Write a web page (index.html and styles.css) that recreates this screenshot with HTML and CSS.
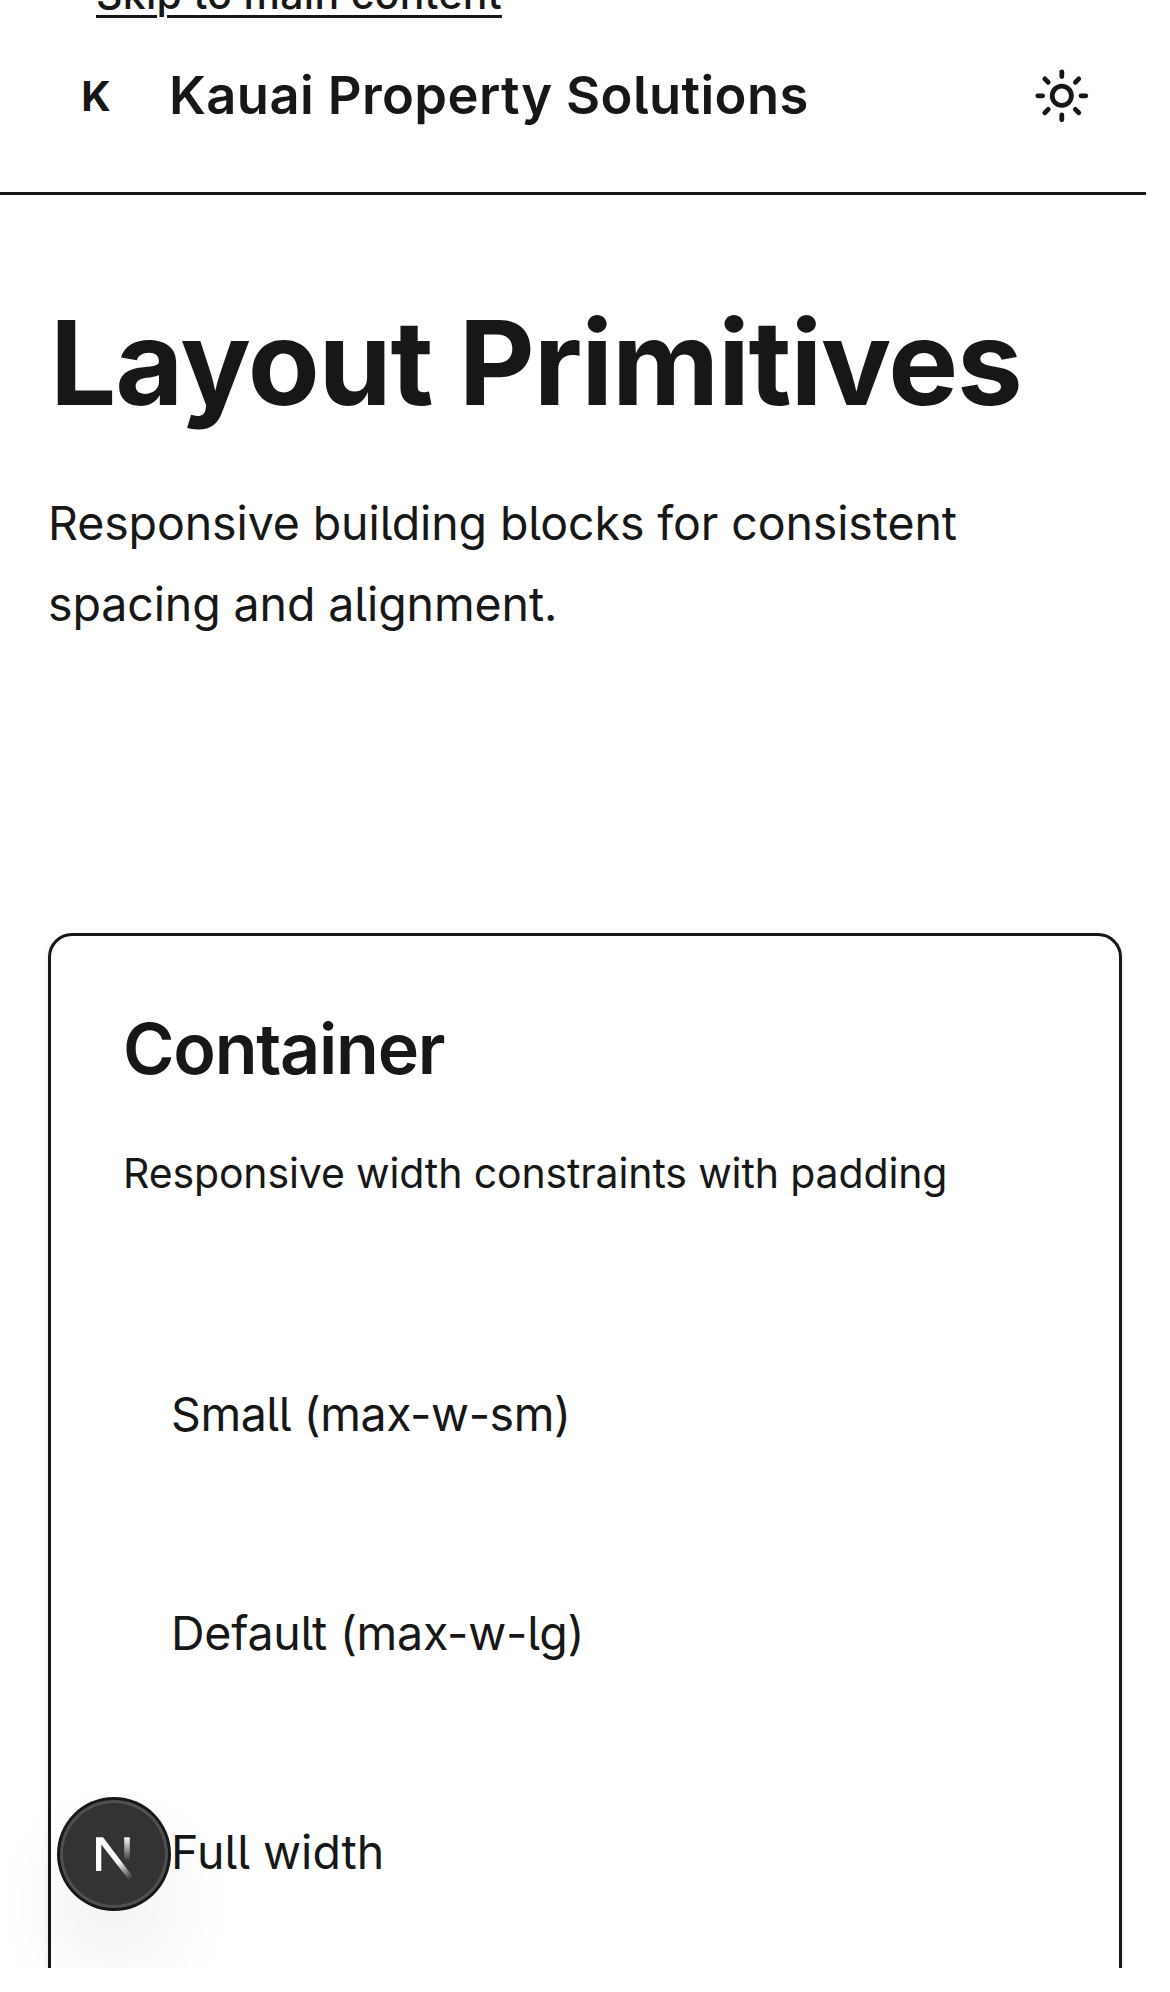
FILE: index.html
```html
<!DOCTYPE html>
<html lang="en">
<head>
  <meta charset="utf-8">
  <title>Layout Primitives</title>
  <link rel="stylesheet" href="styles.css">
</head>
<body>
  <div class="page">
    <a class="skip-link" href="#main">Skip to main content</a>
    <header class="header">
      <div class="brand">
        <span class="brand-mark">K</span>
        <span class="brand-name">Kauai Property Solutions</span>
      </div>
      <svg class="sun" viewBox="0 0 24 24" fill="none" stroke="currentColor" stroke-width="2" stroke-linecap="round" stroke-linejoin="round" role="img" aria-label="Toggle theme">
        <circle cx="12" cy="12" r="4"/>
        <path d="M12 2v2M12 20v2M4.93 4.93l1.41 1.41M17.66 17.66l1.41 1.41M2 12h2M20 12h2M6.34 17.66l-1.41 1.41M19.07 4.93l-1.41 1.41"/>
      </svg>
    </header>
    <main class="main" id="main">
      <h1 class="title">Layout Primitives</h1>
      <p class="lead">Responsive building blocks for consistent spacing and alignment.</p>
      <section class="card">
        <h2 class="card-title">Container</h2>
        <p class="card-text">Responsive width constraints with padding</p>
        <div class="samples">
          <div class="sample sample-sm">Small (max-w-sm)</div>
          <div class="sample sample-lg">Default (max-w-lg)</div>
          <div class="sample">Full width</div>
        </div>
      </section>
    </main>
    <div class="badge">
      <svg class="badge-logo" viewBox="10 10 108 108">
        <defs>
          <linearGradient id="diagonal" gradientUnits="userSpaceOnUse" x1="69" y1="71" x2="82" y2="88">
            <stop offset="0" stop-color="#fff"/>
            <stop offset="1" stop-color="#fff" stop-opacity="0"/>
          </linearGradient>
          <linearGradient id="stem" gradientUnits="userSpaceOnUse" x1="77" y1="47" x2="77" y2="71">
            <stop offset="0" stop-color="#fff"/>
            <stop offset="1" stop-color="#fff" stop-opacity="0"/>
          </linearGradient>
        </defs>
        <path d="M74.2 47.3h5.6V71h-5.6z" fill="url(#stem)"/>
        <path d="M46 81V47.3h7L83.3 87.2 79.2 90.3 51.3 54.6V81z" fill="url(#diagonal)"/>
      </svg>
    </div>
  </div>
</body>
</html>
```
FILE: styles.css
```css
* {
  box-sizing: border-box;
  margin: 0;
}

body {
  background: #fff;
  color: #171717;
  font-family: Inter, "Liberation Sans", sans-serif;
  font-feature-settings: "cv05";
}

.page {
  position: relative;
  width: 1146px;
  height: 1968px;
  overflow: hidden;
}

.skip-link {
  position: absolute;
  top: -30px;
  left: 96px;
  color: inherit;
  font-size: 41px;
  font-weight: 500;
  line-height: 48px;
  letter-spacing: 0.29px;
  white-space: nowrap;
  text-decoration: underline;
  text-decoration-thickness: 3px;
  text-underline-offset: 6px;
}

.header {
  display: flex;
  align-items: center;
  justify-content: space-between;
  height: 195px;
  padding: 0 55px 0 48px;
  border-bottom: 3px solid #171717;
}

.brand {
  display: flex;
  align-items: center;
  gap: 25px;
}

.brand-mark {
  width: 96px;
  font-size: 41px;
  font-weight: 700;
  text-align: center;
}

.brand-name {
  padding-bottom: 2px;
  font-size: 52.5px;
  font-weight: 600;
  letter-spacing: 0.39px;
  white-space: nowrap;
}

.sun {
  width: 57.6px;
  height: 57.6px;
}

.main {
  padding: 107px 24px 0 48px;
}

.title {
  padding-left: 2px;
  font-size: 117.5px;
  font-weight: 700;
  line-height: 120px;
  letter-spacing: -1.21px;
}

.lead {
  margin-top: 61px;
  font-size: 46.5px;
  line-height: 81px;
  letter-spacing: -0.11px;
}

.card {
  height: 1200px;
  margin-top: 288px;
  padding: 68px 72px;
  border: 3px solid #171717;
  border-radius: 24px;
  box-shadow: 0 3px 6px rgba(0, 0, 0, 0.1);
}

.card-title {
  font-size: 70px;
  font-weight: 600;
  line-height: 90px;
  letter-spacing: -1.25px;
}

.card-text {
  margin-top: 48px;
  font-size: 41px;
  line-height: 63px;
  letter-spacing: -0.13px;
}

.samples {
  display: flex;
  flex-direction: column;
  gap: 48px;
  margin-top: 124px;
}

.sample {
  padding: 48px;
  font-size: 46.5px;
  line-height: 75px;
}

.sample-sm {
  letter-spacing: -0.44px;
}

.sample-lg {
  letter-spacing: -0.23px;
}

.badge {
  position: absolute;
  top: 1800px;
  left: 60px;
  width: 108px;
  height: 108px;
  border-radius: 50%;
  background: #333;
  box-shadow:
    0 0 0 3px #171717,
    inset 0 0 0 3px rgba(255, 255, 255, 0.14),
    0 48px 96px -24px rgba(0, 0, 0, 0.24);
}

.badge-logo {
  display: block;
  width: 108px;
  height: 108px;
}
```
